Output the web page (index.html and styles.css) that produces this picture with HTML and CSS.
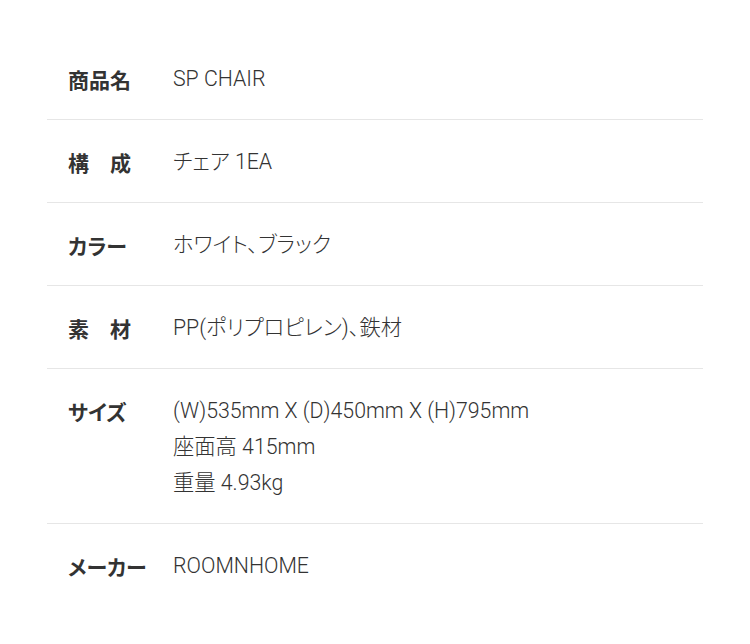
FILE: index.html
```html
<!DOCTYPE html>
<html lang="ja">
<head>
<meta charset="utf-8">
<link rel="stylesheet" href="styles.css">
</head>
<body>
<div class="spec">
  <div class="row first">
    <div class="label">商品名</div>
    <div class="value">SP CHAIR</div>
  </div>
  <div class="row">
    <div class="label">構　成</div>
    <div class="value">チェア 1EA</div>
  </div>
  <div class="row">
    <div class="label label-palt">カラー</div>
    <div class="value">ホワイト、ブラック</div>
  </div>
  <div class="row">
    <div class="label">素　材</div>
    <div class="value">PP(ポリプロピレン)、鉄材</div>
  </div>
  <div class="row">
    <div class="label label-palt">サイズ</div>
    <div class="value">(W)535mm X (D)450mm X (H)795mm<br>座面高 415mm<br>重量 4.93kg</div>
  </div>
  <div class="row last">
    <div class="label label-palt">メーカー</div>
    <div class="value">ROOMNHOME</div>
  </div>
</div>
</body>
</html>
```

FILE: styles.css
```css
html, body {
  margin: 0;
  padding: 0;
  background: #ffffff;
}
body {
  padding: 38px 47px 0 47px;
  color: #333333;
}
.spec {
  width: 656px;
}
.row {
  display: flex;
  align-items: flex-start;
  padding: 24px 0 22px 21px;
  border-bottom: 1px solid #e6e6e6;
}
.row.first {
  padding-top: 23px;
}
.row.last {
  border-bottom: none;
}
.label {
  width: 105px;
  flex: none;
  font-family: "Noto Sans CJK JP", sans-serif;
  font-weight: 700;
  font-size: 21px;
  line-height: 36px;
  color: #333333;
  white-space: nowrap;
}
.label-palt {
  font-feature-settings: "palt";
}
.value {
  font-family: Roboto, "Noto Sans CJK JP", sans-serif;
  font-weight: 300;
  font-size: 21.3px;
  line-height: 36px;
  color: #333333;
  font-feature-settings: "palt";
}
```
